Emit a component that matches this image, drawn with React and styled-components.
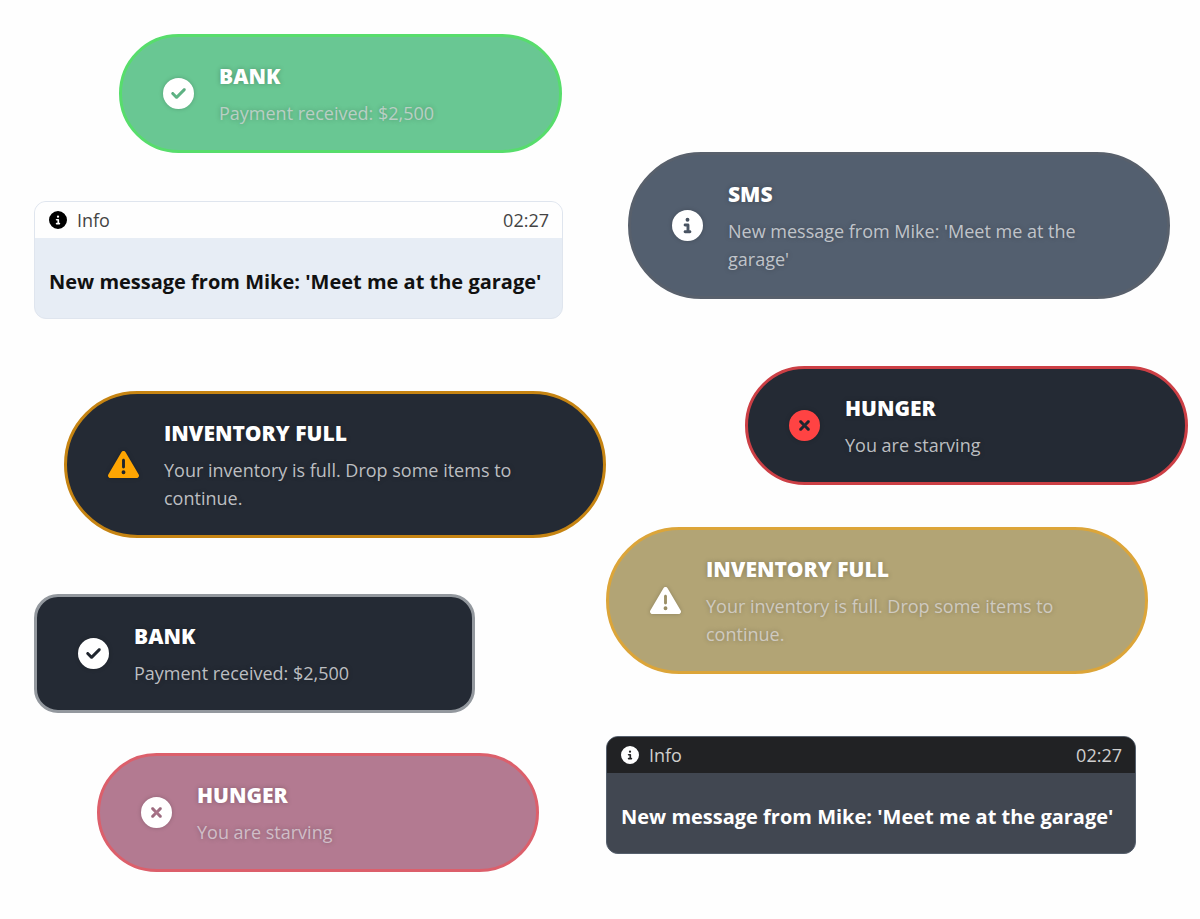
import React from "react";
import styled, { createGlobalStyle, css } from "styled-components";
import {
  FaCircleCheck,
  FaCircleInfo,
  FaCircleXmark,
  FaTriangleExclamation,
} from "react-icons/fa6";

const GlobalStyle = createGlobalStyle`
  * {
    box-sizing: border-box;
  }
  body {
    margin: 0;
    background: #fefefe;
    font-family: "Open Sans", "Noto Sans", sans-serif;
  }
`;

const themes = {
  green: { bg: "#69c793", border: "#57dd6c", text: "#b9cfc4", icon: "#fff" },
  slate: { bg: "#535f6f", border: "#58606c", text: "#c0c4ca", icon: "#fff" },
  orange: { bg: "#242a34", border: "#c68412", text: "#bcbec1", icon: "#ffa502" },
  red: { bg: "#242a34", border: "#cc3f45", text: "#bcbec1", icon: "#ff4343" },
  gold: { bg: "#b2a475", border: "#dca539", text: "#cfcac0", icon: "#fff" },
  dark: { bg: "#242a34", border: "#93989e", text: "#bcbec1", icon: "#fff" },
  pink: { bg: "#b37a91", border: "#dc5f6b", text: "#d0bec8", icon: "#fff" },
};

const Board = styled.main`
  display: grid;
  grid-template-columns: 572fr 582fr;
  padding: 34px 12px 48px 34px;
`;

const Column = styled.div`
  min-width: 0;
  display: flex;
  flex-direction: column;
  padding-top: ${(props) => props.$top || 0}px;
`;

const placed = css`
  width: 100%;
  max-width: ${(props) => props.$width}px;
  margin-left: ${(props) => props.$indent || 0}px;
  margin-bottom: ${(props) => props.$after || 0}px;
`;

const Toast = styled.section`
  ${placed}
  display: flex;
  align-items: center;
  gap: 25px;
  padding: 23px 41px;
  border: 3px solid ${(props) => props.$theme.border};
  border-radius: ${(props) => (props.$square ? 24 : 74)}px;
  background: ${(props) => props.$theme.bg};
  color: ${(props) => props.$theme.text};
  text-shadow: 0 0 5px rgba(0, 0, 0, 0.25);

  > svg {
    flex: none;
    width: 31px;
    height: 31px;
    color: ${(props) => props.$theme.icon};
    filter: drop-shadow(0 0 2px rgba(0, 0, 0, 0.2));
  }
`;

const ToastBody = styled.div`
  padding-top: 2px;
`;

const ToastTitle = styled.h2`
  margin: 0 0 9px;
  font-size: 21px;
  line-height: 28px;
  font-weight: 800;
  color: #fff;
`;

const ToastText = styled.p`
  margin: 0;
  font-size: 18px;
  line-height: 28px;
`;

const Panel = styled.section`
  ${placed}
  overflow: hidden;
  border: 1px solid ${(props) => (props.$light ? "#dfe5ee" : "#56606d")};
  border-radius: 12px;
  background: ${(props) => (props.$light ? "#e7edf5" : "#414751")};
  color: ${(props) => (props.$light ? "#111" : "#fff")};
`;

const PanelHeader = styled.header`
  display: flex;
  align-items: center;
  gap: 10px;
  height: 36px;
  padding: 0 13px 0 14px;
  font-size: 18px;
  background: ${(props) => (props.$light ? "#fefefe" : "#212224")};
  color: ${(props) => (props.$light ? "#444" : "#cfcfcf")};

  svg {
    width: 18px;
    height: 18px;
    color: ${(props) => (props.$light ? "#000" : "#fff")};
  }
  time {
    margin-left: auto;
  }
`;

const PanelText = styled.p`
  margin: 0;
  padding: 30px 14px 22px;
  font-size: 20px;
  line-height: 28px;
  font-weight: 700;
`;

const Notification = ({ theme, icon: Icon, title, children, ...place }) => (
  <Toast $theme={themes[theme]} {...place}>
    <Icon />
    <ToastBody>
      <ToastTitle>{title}</ToastTitle>
      <ToastText>{children}</ToastText>
    </ToastBody>
  </Toast>
);

const InfoPanel = ({ light, children, ...place }) => (
  <Panel $light={light} {...place}>
    <PanelHeader $light={light}>
      <FaCircleInfo />
      <span>Info</span>
      <time>02:27</time>
    </PanelHeader>
    <PanelText>{children}</PanelText>
  </Panel>
);

export default function App() {
  return (
    <>
      <GlobalStyle />
      <Board>
        <Column>
          <Notification theme="green" icon={FaCircleCheck} title="BANK" $width={443} $indent={85} $after={48}>
            Payment received: $2,500
          </Notification>
          <InfoPanel light $width={529} $after={72}>
            New message from Mike: 'Meet me at the garage'
          </InfoPanel>
          <Notification theme="orange" icon={FaTriangleExclamation} title="INVENTORY FULL" $width={542} $indent={30} $after={56}>
            Your inventory is full. Drop some items to continue.
          </Notification>
          <Notification theme="dark" icon={FaCircleCheck} title="BANK" $width={441} $after={40} $square>
            Payment received: $2,500
          </Notification>
          <Notification theme="pink" icon={FaCircleXmark} title="HUNGER" $width={442} $indent={63}>
            You are starving
          </Notification>
        </Column>
        <Column $top={118}>
          <Notification theme="slate" icon={FaCircleInfo} title="SMS" $width={542} $indent={22} $after={67}>
            New message from Mike: 'Meet me at the garage'
          </Notification>
          <Notification theme="red" icon={FaCircleXmark} title="HUNGER" $width={443} $indent={139} $after={42}>
            You are starving
          </Notification>
          <Notification theme="gold" icon={FaTriangleExclamation} title="INVENTORY FULL" $width={542} $after={62}>
            Your inventory is full. Drop some items to continue.
          </Notification>
          <InfoPanel $width={530}>
            New message from Mike: 'Meet me at the garage'
          </InfoPanel>
        </Column>
      </Board>
    </>
  );
}
